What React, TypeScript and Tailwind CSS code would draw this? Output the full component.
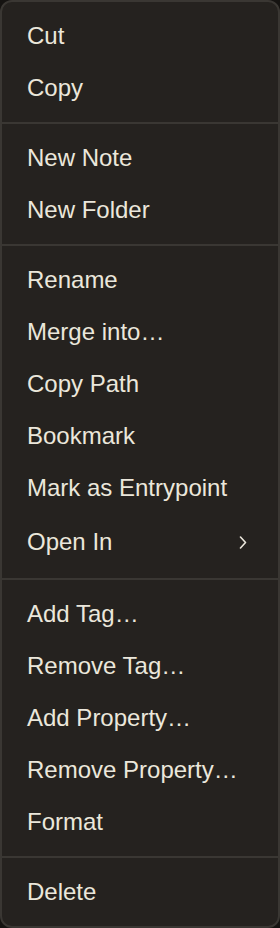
import React from "react";

type Item = { label: string; sub?: boolean } | "sep";

const items: Item[] = [
  { label: "Cut" },
  { label: "Copy" },
  "sep",
  { label: "New Note" },
  { label: "New Folder" },
  "sep",
  { label: "Rename" },
  { label: "Merge into…" },
  { label: "Copy Path" },
  { label: "Bookmark" },
  { label: "Mark as Entrypoint" },
  { label: "Open In", sub: true },
  "sep",
  { label: "Add Tag…" },
  { label: "Remove Tag…" },
  { label: "Add Property…" },
  { label: "Remove Property…" },
  { label: "Format" },
  "sep",
  { label: "Delete" },
];

export default function App() {
  return (
    <div className="w-[280px] h-[928px] bg-[#151311]">
      <div
        className="w-[280px] h-[928px] rounded-[12px] border-2 border-[#3a3733] bg-[#25221f] py-[8px] flex flex-col text-[#ebe7db] text-[24px]"
        style={{ fontFamily: '"Liberation Sans", Arial, sans-serif' }}
      >
        {items.map((it, i) =>
          it === "sep" ? (
            <div key={i} className="py-[8px]">
              <div className="h-[2px] bg-[#3a3733]" />
            </div>
          ) : (
            <div
              key={i}
              className={`flex items-center justify-between pl-[25px] pr-[31px] ${
                it.sub ? "h-[56px]" : "h-[52px]"
              }`}
            >
              <span className="leading-none whitespace-nowrap">{it.label}</span>
              {it.sub && (
                <svg width="8" height="13" viewBox="0 0 8 13" fill="none">
                  <path
                    d="M1.5 1 L6.5 6.5 L1.5 12"
                    stroke="#ebe7db"
                    strokeWidth="1.6"
                    strokeLinecap="round"
                    strokeLinejoin="round"
                  />
                </svg>
              )}
            </div>
          )
        )}
      </div>
    </div>
  );
}
